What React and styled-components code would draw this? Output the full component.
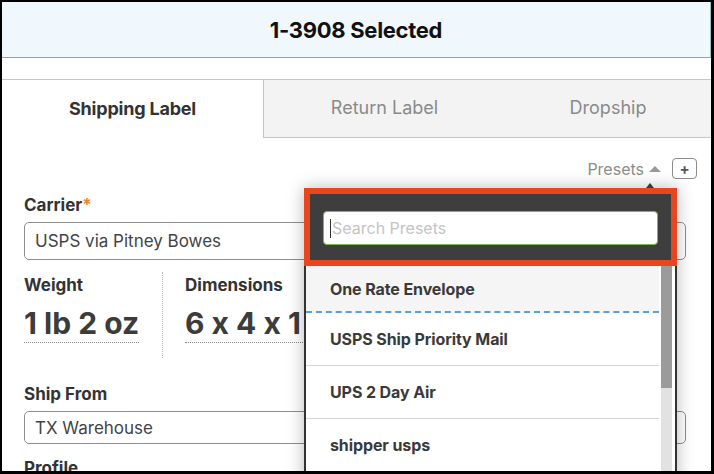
import React from 'react';
import styled, { createGlobalStyle } from 'styled-components';

const Global = createGlobalStyle`
  html, body {
    margin: 0;
    padding: 0;
    background: #000;
  }
  * {
    box-sizing: border-box;
  }
`;

const Frame = styled.div`
  position: relative;
  width: 714px;
  height: 474px;
  overflow: hidden;
  background: #fff;
  border-style: solid;
  border-color: #000;
  border-width: 2px 3px 3px 2px;
  font-family: Inter, "Liberation Sans", sans-serif;
  font-feature-settings: "calt" 0;
  color: #333;
`;

const Header = styled.div`
  height: 56px;
  display: flex;
  align-items: center;
  justify-content: center;
  background: #f1f8fd;
  border-bottom: 1px solid #7fa9b4;
  border-right: 1px solid #9cc0ca;
  font-size: 22px;
  font-weight: 700;
  color: #111;
  letter-spacing: -0.3px;
`;

const Tabs = styled.div`
  margin-top: 21px;
  display: grid;
  grid-template-columns: 261px 242px 1fr;
  height: 59px;
  border-top: 1px solid #c6c6c6;
`;

const Tab = styled.div`
  display: flex;
  align-items: center;
  justify-content: center;
  padding-bottom: 2px;
  font-size: 18px;
  font-weight: ${p => (p.active ? 700 : 400)};
  letter-spacing: ${p => (p.active ? '-0.2px' : '0')};
  color: ${p => (p.active ? '#333' : '#8a8a8a')};
  background: ${p => (p.active ? '#fff' : '#f3f3f3')};
  border-bottom: ${p => (p.active ? 'none' : '1px solid #c6c6c6')};
  border-left: ${p => (p.first ? '1px solid #c6c6c6' : 'none')};
`;

const Body = styled.div`
  padding: 20px 25px 0 22px;
`;

const PresetsRow = styled.div`
  display: flex;
  justify-content: flex-end;
  align-items: center;
  gap: 11px;
  height: 21px;
  margin-right: -11px;
`;

const PresetsToggle = styled.div`
  display: flex;
  align-items: center;
  gap: 5px;
  font-size: 16px;
  color: #8c8c8c;
`;

const Caret = styled.span`
  width: 0;
  height: 0;
  border-left: 6px solid transparent;
  border-right: 6px solid transparent;
  border-bottom: 6px solid #9a9a9a;
  margin-top: 1px;
`;

const AddButton = styled.div`
  width: 25px;
  height: 21px;
  border: 1.5px solid #8c8c8c;
  border-radius: 4px;
  display: flex;
  align-items: center;
  justify-content: center;
  font-size: 15px;
  font-weight: 700;
  color: #555;
  line-height: 1;
`;

const Label = styled.div`
  font-size: 17px;
  font-weight: 700;
  color: #333;
  line-height: 20px;
  margin-top: ${p => p.top || 0}px;
`;

const Required = styled.span`
  color: #f0852d;
`;

const Field = styled.div`
  height: ${p => p.h}px;
  margin-top: ${p => p.top}px;
  border: 1px solid #8e8e8e;
  border-radius: 5px;
  display: flex;
  align-items: center;
  padding: 0 10px;
  font-size: 17px;
  color: #444;
`;

const Measures = styled.div`
  display: grid;
  grid-template-columns: 138px 1fr;
  margin-top: 12px;
`;

const Measure = styled.div`
  padding: 3px 0 15px ${p => (p.divided ? 22 : 0)}px;
  border-left: ${p => (p.divided ? '1px dotted #bdbdbd' : 'none')};
`;

const Value = styled.div`
  display: inline-block;
  margin-top: 11px;
  font-size: 30px;
  font-weight: 700;
  color: #3c3c3c;
  line-height: 34px;
  padding-bottom: 2px;
  border-bottom: 1px dotted #888;
  min-width: ${p => p.min || 0}px;
`;

/* preset dropdown laid over the form */
const Dropdown = styled.div`
  position: absolute;
  left: 302px;
  top: 186px;
  width: 373px;
  box-shadow: 0 0 16px rgba(0, 0, 0, 0.28);

  &::before {
    content: '';
    position: absolute;
    top: -5px;
    left: 342px;
    border-left: 4px solid transparent;
    border-right: 4px solid transparent;
    border-bottom: 5px solid #3a3a3a;
  }
`;

const SearchBox = styled.div`
  position: relative;
  z-index: 1;
  margin-bottom: -6px;
  background: #3e3e3e;
  border: 6px solid #e8461e;
  padding: 17px 13px 15px;
`;

const SearchInput = styled.div`
  height: 34px;
  background: #fff;
  border: 1px solid #7fb84a;
  border-radius: 4px;
  display: flex;
  align-items: center;
  padding-left: 6px;
  font-size: 16px;
  color: #c4c4c4;
`;

const Cursor = styled.span`
  width: 1px;
  height: 19px;
  background: #333;
  margin-right: 1px;
`;

const List = styled.div`
  display: flex;
  background: #fff;
  border-left: 2px solid #333;
  border-right: 2px solid #333;
  height: 230px;
`;

const Items = styled.div`
  flex: 1;
`;

const Item = styled.div`
  height: 53px;
  display: flex;
  align-items: center;
  padding-left: 24px;
  padding-top: ${p => (p.hovered ? 6 : 0)}px;
  font-size: 16px;
  font-weight: 700;
  letter-spacing: -0.1px;
  color: #3a3a3a;
  background: ${p => (p.hovered ? '#f5f5f5' : '#fff')};
  border-bottom: ${p => (p.hovered ? '2px dashed #5b9fd3' : '1px solid #d6d6d6')};
`;

const Track = styled.div`
  width: 11px;
  margin: 0 3px 0 2px;
  background: #e2e2e2;
`;

const Thumb = styled.div`
  height: 128px;
  background: #9b9b9b;
`;

const presets = ['One Rate Envelope', 'USPS Ship Priority Mail', 'UPS 2 Day Air', 'shipper usps'];

export default function App() {
  return (
    <Frame>
      <Global />
      <Header>1-3908 Selected</Header>
      <Tabs>
        <Tab active>Shipping Label</Tab>
        <Tab first>Return Label</Tab>
        <Tab>Dropship</Tab>
      </Tabs>
      <Body>
        <PresetsRow>
          <PresetsToggle>
            Presets <Caret />
          </PresetsToggle>
          <AddButton>+</AddButton>
        </PresetsRow>
        <Label top={16}>
          Carrier<Required>*</Required>
        </Label>
        <Field h={38} top={7}>USPS via Pitney Bowes</Field>
        <Measures>
          <Measure>
            <Label>Weight</Label>
            <Value>1 lb 2 oz</Value>
          </Measure>
          <Measure divided>
            <Label>Dimensions</Label>
            <Value min={160}>6 x 4 x 1</Value>
          </Measure>
        </Measures>
        <Label top={26}>Ship From</Label>
        <Field h={33} top={7}>TX Warehouse</Field>
        <Label top={14}>Profile</Label>
      </Body>
      <Dropdown>
        <SearchBox>
          <SearchInput>
            <Cursor />
            Search Presets
          </SearchInput>
        </SearchBox>
        <List>
          <Items>
            {presets.map((name, i) => (
              <Item key={name} hovered={i === 0}>
                {name}
              </Item>
            ))}
          </Items>
          <Track>
            <Thumb />
          </Track>
        </List>
      </Dropdown>
    </Frame>
  );
}
